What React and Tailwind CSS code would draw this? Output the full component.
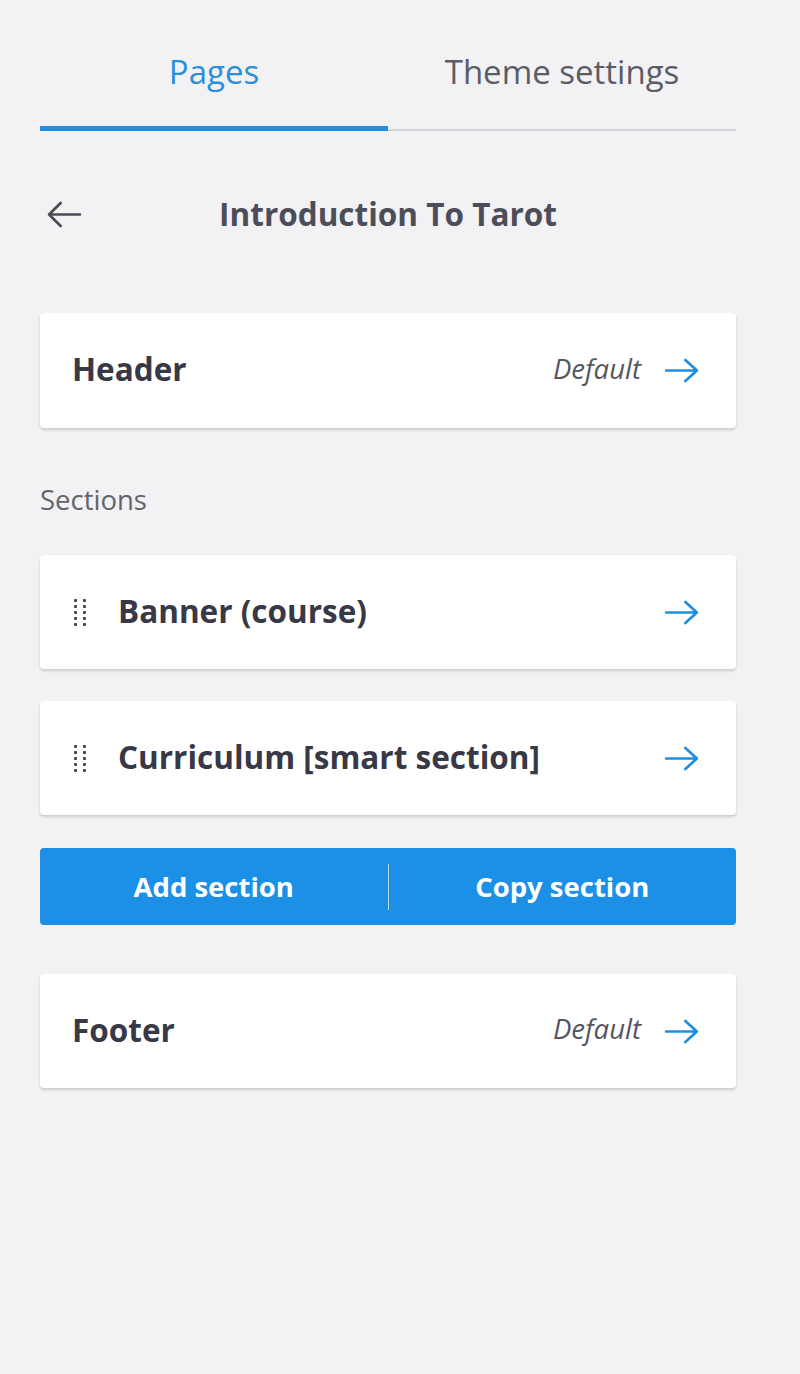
import clsx from 'clsx';

const tabs = [
  { label: 'Pages', active: true },
  { label: 'Theme settings', active: false },
];

function Arrow({ className, color = '#1f8ee0' }) {
  return (
    <svg viewBox="0 0 36 26" className={className} fill="none" stroke={color} strokeWidth="2.8" strokeLinecap="round" strokeLinejoin="round">
      <path d="M2 13H34M22 2L34 13L22 24" />
    </svg>
  );
}

function DragHandle() {
  const dots = [0, 1, 2, 3, 4];
  return (
    <div className="grid grid-cols-2 gap-x-[6px] gap-y-[3px] ml-[2px] mr-[32px]">
      {dots.map((d) => (
        <>
          <span key={'a' + d} className="w-[3px] h-[3px] rounded-[1px] bg-[#44454f]" />
          <span key={'b' + d} className="w-[3px] h-[3px] rounded-[1px] bg-[#44454f]" />
        </>
      ))}
    </div>
  );
}

function Card({ title, meta, drag, className }) {
  return (
    <div className={clsx('flex items-center h-[114px] bg-white rounded-[4px] shadow-[0_2px_3px_rgba(0,0,0,0.16)] pl-[32px] pr-[37px]', className)}>
      {drag && <DragHandle />}
      <span className="text-[31.5px] font-bold text-[#383846] leading-none -mt-[3px]">{title}</span>
      <div className="ml-auto flex items-center">
        {meta && <span className="italic text-[27.5px] leading-none text-[#55565e] mr-[23px] -mt-[4px]">{meta}</span>}
        <Arrow className="w-[35px] h-[25px]" />
      </div>
    </div>
  );
}

export default function App() {
  return (
    <div className="min-h-[1374px] bg-[#f2f1f4] px-[40px] w-[800px]" style={{ fontFamily: '"Open Sans", sans-serif' }}>
      <div className="w-[696px]">
        {/* Tabs */}
        <div className="flex">
          {tabs.map((t) => (
            <div key={t.label} className="flex h-[131px] flex-1 flex-col">
              <div
                className={clsx(
                  'pt-[50px] leading-[44px] text-[33px] text-center',
                  t.active ? 'text-[#2a8fd9]' : 'text-[#5a5c66]'
                )}
              >
                {t.label}
              </div>
              <div className={clsx('mt-auto', t.active ? 'h-[5px] bg-[#1f8ee0]' : 'h-[2px] bg-[#d3d3d8]')} />
            </div>
          ))}
        </div>

        {/* Title row */}
        <div className="relative flex items-center justify-center mt-[62px] h-[44px]">
          <svg viewBox="0 0 36 28" className="absolute left-[7px] top-[8px] w-[35px] h-[27px]" fill="none" stroke="#4a4b55" strokeWidth="2.8" strokeLinecap="round" strokeLinejoin="round">
            <path d="M34 14H2M14 2L2 14L14 26" />
          </svg>
          <span className="text-[31.5px] font-bold text-[#4b4e58] -mt-[2px]">Introduction To Tarot</span>
        </div>

        <Card title="Header" meta="Default" className="mt-[76px] h-[115px]" />

        <div className="mt-[56px] leading-[32px] text-[27.5px] text-[#63646c]">Sections</div>

        <Card title="Banner (course)" drag className="mt-[39px]" />
        <Card title="Curriculum [smart section]" drag className="mt-[32px]" />

        <div className="mt-[33px] flex items-center h-[77px] rounded-[4px] bg-[#1c8fe6] text-white text-[27.5px] font-bold">
          <button className="flex-1 text-center">Add section</button>
          <div className="w-px h-[46px] bg-white/70" />
          <button className="flex-1 text-center">Copy section</button>
        </div>

        <Card title="Footer" meta="Default" className="mt-[49px]" />
      </div>
    </div>
  );
}
